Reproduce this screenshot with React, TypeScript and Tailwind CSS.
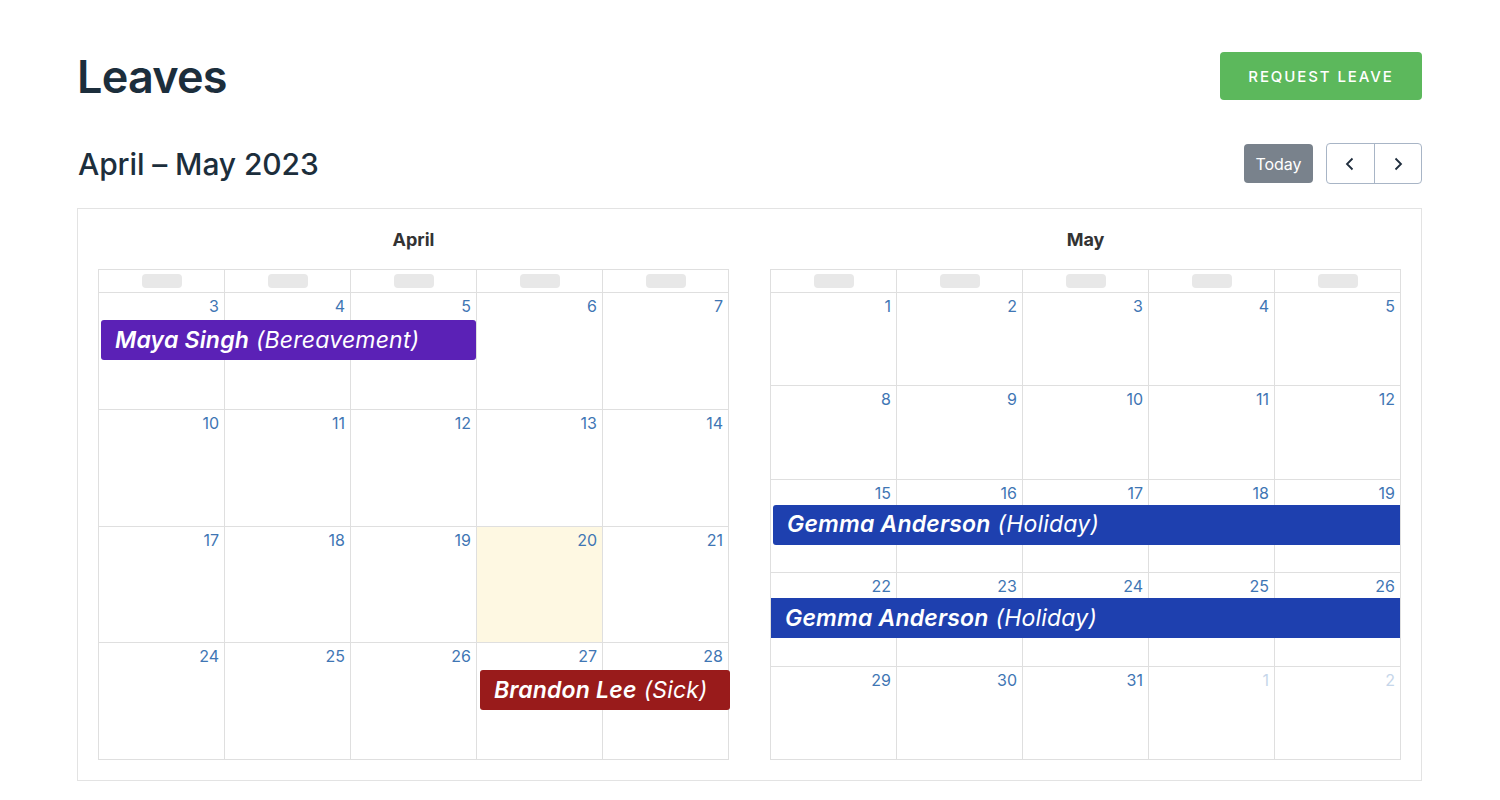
import React from "react";

const COL_START = ["col-start-1", "col-start-2", "col-start-3", "col-start-4", "col-start-5"];
const COL_SPAN = ["col-span-1", "col-span-2", "col-span-3", "col-span-4", "col-span-5"];

type Day = { n: number; other?: boolean; today?: boolean };
type Ev = {
  name: string;
  kind: string;
  col: number;
  span: number;
  color: string;
  cls: string;
};
type Week = { days: Day[]; events: Ev[] };

const april: Week[] = [
  {
    days: [{ n: 3 }, { n: 4 }, { n: 5 }, { n: 6 }, { n: 7 }],
    events: [
      {
        name: "Maya Singh",
        kind: "(Bereavement)",
        col: 0,
        span: 3,
        color: "bg-[#5b21b6]",
        cls: "ml-[2px] mr-[1px] rounded-[3px]",
      },
    ],
  },
  { days: [{ n: 10 }, { n: 11 }, { n: 12 }, { n: 13 }, { n: 14 }], events: [] },
  {
    days: [{ n: 17 }, { n: 18 }, { n: 19 }, { n: 20, today: true }, { n: 21 }],
    events: [],
  },
  {
    days: [{ n: 24 }, { n: 25 }, { n: 26 }, { n: 27 }, { n: 28 }],
    events: [
      {
        name: "Brandon Lee",
        kind: "(Sick)",
        col: 3,
        span: 2,
        color: "bg-[#991b1b]",
        cls: "ml-[3px] -mr-[1px] rounded-[3px]",
      },
    ],
  },
];

const may: Week[] = [
  { days: [{ n: 1 }, { n: 2 }, { n: 3 }, { n: 4 }, { n: 5 }], events: [] },
  { days: [{ n: 8 }, { n: 9 }, { n: 10 }, { n: 11 }, { n: 12 }], events: [] },
  {
    days: [{ n: 15 }, { n: 16 }, { n: 17 }, { n: 18 }, { n: 19 }],
    events: [
      {
        name: "Gemma Anderson",
        kind: "(Holiday)",
        col: 0,
        span: 5,
        color: "bg-[#1e40af]",
        cls: "ml-[2px] mr-[1px] rounded-l-[3px]",
      },
    ],
  },
  {
    days: [{ n: 22 }, { n: 23 }, { n: 24 }, { n: 25 }, { n: 26 }],
    events: [
      {
        name: "Gemma Anderson",
        kind: "(Holiday)",
        col: 0,
        span: 5,
        color: "bg-[#1e40af]",
        cls: "mr-[1px]",
      },
    ],
  },
  {
    days: [{ n: 29 }, { n: 30 }, { n: 31 }, { n: 1, other: true }, { n: 2, other: true }],
    events: [],
  },
];

function MonthTable({
  title,
  weeks,
  rowsCls,
}: {
  title: string;
  weeks: Week[];
  rowsCls: string;
}) {
  return (
    <div className="flex flex-col">
      <div className="h-[60px] flex items-center justify-center text-[18px] font-bold text-[#333333]">
        {title}
      </div>
      <div className="flex flex-col h-[491px] border-l border-t border-[#dfdfdf]">
        <div className="h-[23px] grid grid-cols-5 shrink-0">
          {[0, 1, 2, 3, 4].map((i) => (
            <div
              key={i}
              className="border-r border-b border-[#dfdfdf] flex items-center justify-center"
            >
              <div className="w-[40px] h-[14px] rounded-[4px] bg-[#e8e8e8]" />
            </div>
          ))}
        </div>
        {weeks.map((w, wi) => (
          <div key={wi} className={`flex-1 grid grid-cols-5 ${rowsCls}`}>
            {w.days.map((d, di) => (
              <div
                key={di}
                className={`${COL_START[di]} row-start-1 row-span-3 border-r border-b border-[#dfdfdf] ${
                  d.today ? "bg-[#fef8e2]" : ""
                }`}
              >
                <div
                  className={`text-right pr-[5px] pt-[3px] text-[16px] leading-[20px] ${
                    d.other ? "text-[#c6d6ea]" : "text-[#3f76b4]"
                  }`}
                >
                  {d.n}
                </div>
              </div>
            ))}
            {w.events.map((e, ei) => (
              <div
                key={ei}
                className={`${COL_START[e.col]} ${COL_SPAN[e.span - 1]} row-start-2 h-[40px] ${e.color} ${e.cls} flex items-center px-[14px] text-white italic text-[23px] tracking-[0.2px] leading-none whitespace-nowrap overflow-hidden z-10`}
              >
                <span className="font-semibold">{e.name}</span>
                <span className="ml-[7px] font-normal">{e.kind}</span>
              </div>
            ))}
          </div>
        ))}
      </div>
    </div>
  );
}

export default function App() {
  return (
    <div className="min-h-[800px] bg-white font-[family-name:Inter,sans-serif] text-[#1c2e3c]">
      <div className="ml-[77px] w-[1345px] pt-[52px]">
        <div className="flex items-center justify-between h-[48px]">
          <h1 className="text-[45px] font-semibold leading-none tracking-[-0.8px]">Leaves</h1>
          <button className="w-[202px] h-[48px] rounded-[4px] bg-[#5cb85c] text-white text-[15px] font-medium tracking-[1.9px] uppercase pt-[2px]">
            Request Leave
          </button>
        </div>
        <div className="mt-[43px] flex items-center justify-between h-[41px]">
          <h2 className="ml-[1px] text-[30px] font-medium leading-none tracking-[-0.1px]">
            April – May 2023
          </h2>
          <div className="flex items-center">
            <button className="w-[69px] h-[39px] rounded-[4px] bg-[#79828c] text-white text-[16px]">
              Today
            </button>
            <div className="ml-[13px] flex h-[41px] w-[96px] rounded-[4px] border border-[#a8b5c6] overflow-hidden">
              <button className="flex-1 flex items-center justify-center border-r border-[#a8b5c6]">
                <svg width="16" height="16" viewBox="0 0 16 16" fill="none">
                  <path d="M10.5 2.5 5 8l5.5 5.5" stroke="#1f2d3d" strokeWidth="1.8" />
                </svg>
              </button>
              <button className="flex-1 flex items-center justify-center">
                <svg width="16" height="16" viewBox="0 0 16 16" fill="none">
                  <path d="M5.5 2.5 11 8l-5.5 5.5" stroke="#1f2d3d" strokeWidth="1.8" />
                </svg>
              </button>
            </div>
          </div>
        </div>
        <div className="mt-[24px] border border-[#e3e3e3] px-[20px] pb-[20px] grid grid-cols-2 gap-[41px]">
          <MonthTable title="April" weeks={april} rowsCls="grid-rows-[27px_40px_1fr]" />
          <MonthTable title="May" weeks={may} rowsCls="grid-rows-[25px_40px_1fr]" />
        </div>
      </div>
    </div>
  );
}
